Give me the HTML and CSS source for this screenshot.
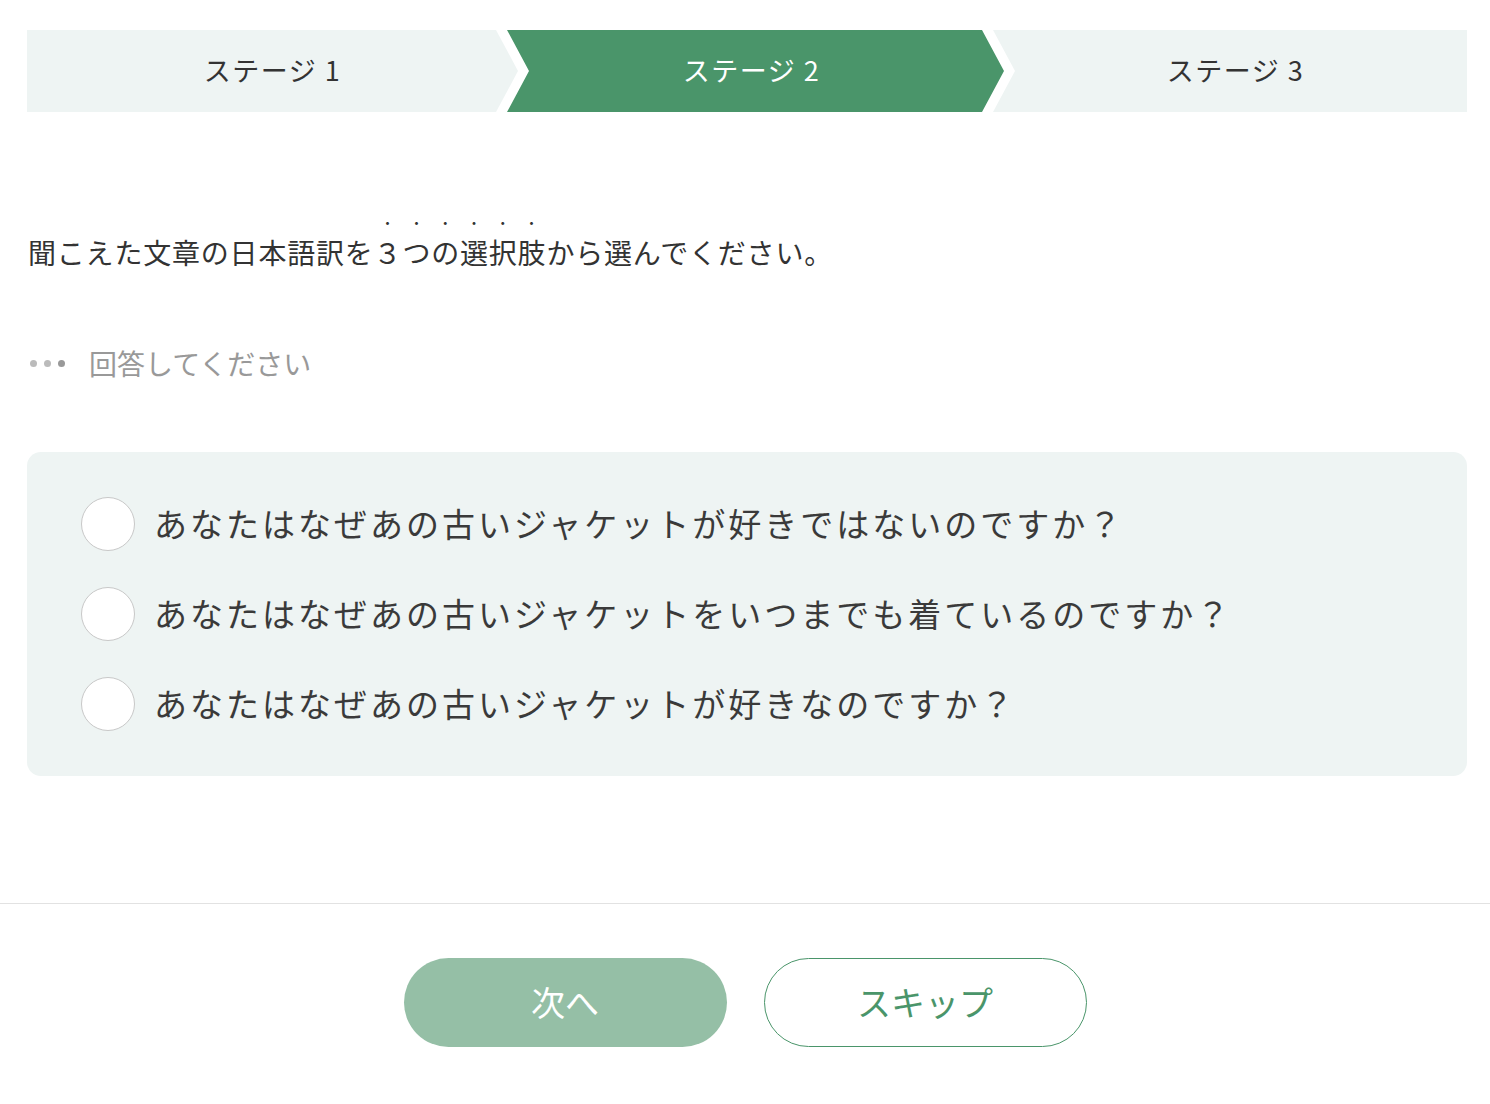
FILE: index.html
```html
<!DOCTYPE html>
<html lang="ja">
<head>
  <meta charset="UTF-8">
  <meta name="viewport" content="width=device-width, initial-scale=1.0">
  <title>リスニング問題</title>
  <link rel="stylesheet" href="styles.css">
</head>
<body>

<div class="container">
  <div class="stages">
    <div class="stage stage-first">ステージ 1</div>
    <div class="stage stage-middle active">ステージ 2</div>
    <div class="stage stage-last">ステージ 3</div>
  </div>

  <p class="question">聞こえた文章の日本語訳を<span class="emphasis">３つの選択肢</span>から選んでください。</p>

  <div class="answer">
    <div class="dots">
      <span class="dot"></span>
      <span class="dot"></span>
      <span class="dot dark"></span>
    </div>
    <span>回答してください</span>
  </div>

  <div class="choices">
    <label class="choice">
      <span class="radio"></span>
      <span class="choice-text">あなたはなぜあの古いジャケットが好きではないのですか？</span>
    </label>
    <label class="choice">
      <span class="radio"></span>
      <span class="choice-text">あなたはなぜあの古いジャケットをいつまでも着ているのですか？</span>
    </label>
    <label class="choice">
      <span class="radio"></span>
      <span class="choice-text">あなたはなぜあの古いジャケットが好きなのですか？</span>
    </label>
  </div>
</div>

<div class="footer">
  <button class="btn btn-next">次へ</button>
  <button class="btn btn-skip">スキップ</button>
</div>

</body>
</html>
```
FILE: styles.css
```css
body {
  --green: #4a956a;
  --light-bg: #eef4f3;
  --text-color: #333;

  font-family: 'Noto Sans CJK JP', 'Noto Sans', sans-serif;
  color: var(--text-color);
  background: #fff;
  margin: 0;
}

.container {
  padding: 30px 23px 0 27px;
}

/* stage bar */
.stages {
  display: flex;
  height: 82px;
}

.stage {
  display: flex;
  justify-content: center;
  align-items: center;
  padding-bottom: 4px;
  background: var(--light-bg);
  font-size: 27px;
  letter-spacing: 1.5px;
  box-sizing: border-box;
  white-space: pre;
}

.stage-first {
  flex: 0 0 491px;
  clip-path: polygon(0 0, calc(100% - 22px) 0, 100% 50%, calc(100% - 22px) 100%, 0 100%);
}

.stage-middle {
  flex: 0 0 497px;
  margin-left: -11px;
  padding-right: 8px;
  clip-path: polygon(0 0, calc(100% - 22px) 0, 100% 50%, calc(100% - 22px) 100%, 0 100%, 22px 50%);
}

.stage-last {
  flex: 0 0 474px;
  margin-left: -11px;
  padding-left: 11px;
  clip-path: polygon(0 0, 100% 0, 100% 100%, 0 100%, 22px 50%);
}

.stage.active {
  background: var(--green);
  color: #fff;
}

/* question */
.question {
  margin: 100px 0 0 1px;
  font-size: 28px;
  line-height: 40px;
  letter-spacing: 0.8px;
}

.emphasis {
  text-emphasis: "・";
  -webkit-text-emphasis: "・";
  text-emphasis-position: over right;
}

.answer {
  display: flex;
  align-items: center;
  margin-top: 71px;
  height: 40px;
  font-size: 28px;
  color: #999;
}

.dots {
  display: flex;
  gap: 7px;
  margin: 0 24px 0 3px;
}

.dot {
  width: 7px;
  height: 7px;
  border-radius: 50%;
  background: #bbb;
}

.dot.dark {
  background: #999;
}

/* choices */
.choices {
  margin-top: 69px;
  padding: 27px 54px;
  background: var(--light-bg);
  border-radius: 14px;
}

.choice {
  display: flex;
  align-items: center;
  height: 90px;
  cursor: pointer;
}

.radio {
  flex: 0 0 auto;
  width: 52px;
  height: 52px;
  border: 1px solid #c8c8c8;
  border-radius: 50%;
  background: #fff;
}

.choice-text {
  margin-left: 19px;
  padding-bottom: 3px;
  font-size: 33px;
  letter-spacing: 3px;
  color: #3a3a3a;
}

/* footer buttons */
.footer {
  margin-top: 127px;
  border-top: 1px solid #e2e2e2;
  padding-top: 54px;
  display: flex;
  justify-content: center;
  gap: 37px;
}

.btn {
  width: 323px;
  height: 89px;
  border-radius: 45px;
  font-family: inherit;
  font-size: 34px;
  padding-bottom: 4px;
  cursor: pointer;
}

.btn-next {
  background: #95bfa6;
  color: #fff;
  border: none;
}

.btn-skip {
  background: #fff;
  color: var(--green);
  border: 1px solid var(--green);
}
```
